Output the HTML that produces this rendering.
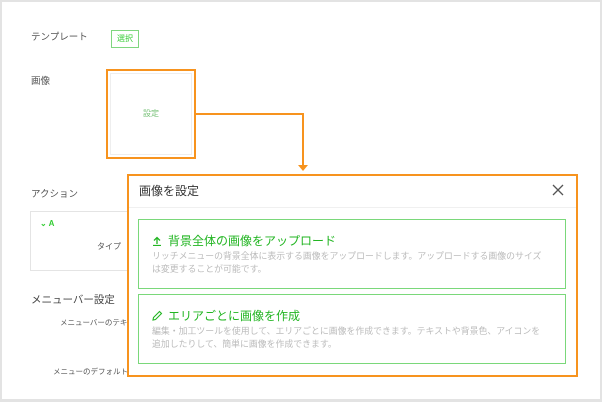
<!DOCTYPE html><html><head><meta charset="utf-8"><style>
*{margin:0;padding:0;box-sizing:border-box}
body{width:602px;height:402px;background:#e3e3e3;font-family:"Liberation Sans","Noto Sans CJK JP",sans-serif;position:relative;overflow:hidden}
.pg{position:absolute;left:2px;top:2px;width:598px;height:397px;background:#fff}
.a{position:absolute;white-space:nowrap}
.lbl{font-size:9.5px;color:#555}
</style></head><body><div class="pg"></div>
<div class="a lbl" style="left:31px;top:29px">テンプレート</div>
<div class="a" style="left:111px;top:30px;width:28px;height:18px;border:1px solid #7fd67f;color:#3c3;font-size:8px;line-height:16px;text-align:center">選択</div>
<div class="a lbl" style="left:31px;top:73px">画像</div>
<div class="a" style="left:106px;top:69px;width:90px;height:90px;border:2px solid #f7931e"></div>
<div class="a" style="left:110px;top:73px;width:82px;height:82px;border:1px solid #eee;color:#7ac27a;font-size:8px;line-height:80px;text-align:center">設定</div>
<div class="a" style="left:196px;top:113px;width:108px;height:2px;background:#f7931e"></div>
<div class="a" style="left:302px;top:113px;width:2px;height:53px;background:#f7931e"></div>
<div class="a" style="left:298px;top:165px;width:0;height:0;border-left:5px solid transparent;border-right:5px solid transparent;border-top:6px solid #f7931e"></div>
<div class="a lbl" style="left:31px;top:186px">アクション</div>
<div class="a" style="left:30px;top:211px;width:100px;height:60px;border:1px solid #e4e4e4"></div>
<div class="a" style="left:40px;top:219px;font-size:8px;color:#3c3;font-weight:bold">⌄ A</div>
<div class="a" style="left:97px;top:241px;font-size:8px;color:#555">タイプ</div>
<div class="a" style="left:31px;top:292px;font-size:10.5px;color:#444">メニューバー設定</div>
<div class="a" style="left:60px;top:317px;font-size:7.5px;color:#555">メニューバーのテキ</div>
<div class="a" style="left:53px;top:366px;font-size:7.5px;color:#555">メニューのデフォルト</div>
<div class="a" style="left:127px;top:174px;width:451px;height:203px;border:2px solid #f7931e;background:#fff">
<div class="a" style="left:10px;top:6px;font-size:12px;color:#333">画像を設定</div>
<svg class="a" style="left:423px;top:8px" width="12" height="12" viewBox="0 0 12 12"><path d="M1 1L11 11M11 1L1 11" stroke="#555" stroke-width="1.3"/></svg>
<div class="a" style="left:0;top:31px;width:447px;height:1px;background:#f0f0f0"></div>
<div class="a" style="left:9px;top:43px;width:428px;height:70px;border:1px solid #7ad87a;overflow:hidden">
<svg class="a" style="left:13px;top:16px" width="10" height="10" viewBox="0 0 10 10"><path d="M1 9.5H9M5 8V1.5M2 4.5L5 1.5L8 4.5" stroke="#22b522" stroke-width="1.3" fill="none"/></svg>
<div class="a" style="left:29px;top:12px;font-size:12px;color:#22b522">背景全体の画像をアップロード</div>
<div class="a" style="left:13px;top:30px;font-size:8.9px;color:#bbb;line-height:12.5px">リッチメニューの背景全体に表示する画像をアップロードします。アップロードする画像のサイズ<br>は変更することが可能です。</div></div>
<div class="a" style="left:9px;top:118px;width:428px;height:70px;border:1px solid #7ad87a;overflow:hidden">
<svg class="a" style="left:13px;top:15px" width="11" height="11" viewBox="0 0 11 11"><path d="M1 10L1.5 7.5L7.5 1.5L9.5 3.5L3.5 9.5Z" stroke="#22b522" stroke-width="1.1" fill="none"/></svg>
<div class="a" style="left:29px;top:12px;font-size:12px;color:#22b522">エリアごとに画像を作成</div>
<div class="a" style="left:13px;top:30px;font-size:8.9px;color:#bbb;line-height:12.5px">編集・加工ツールを使用して、エリアごとに画像を作成できます。テキストや背景色、アイコンを<br>追加したりして、簡単に画像を作成できます。</div></div>
</div>
</body></html>
